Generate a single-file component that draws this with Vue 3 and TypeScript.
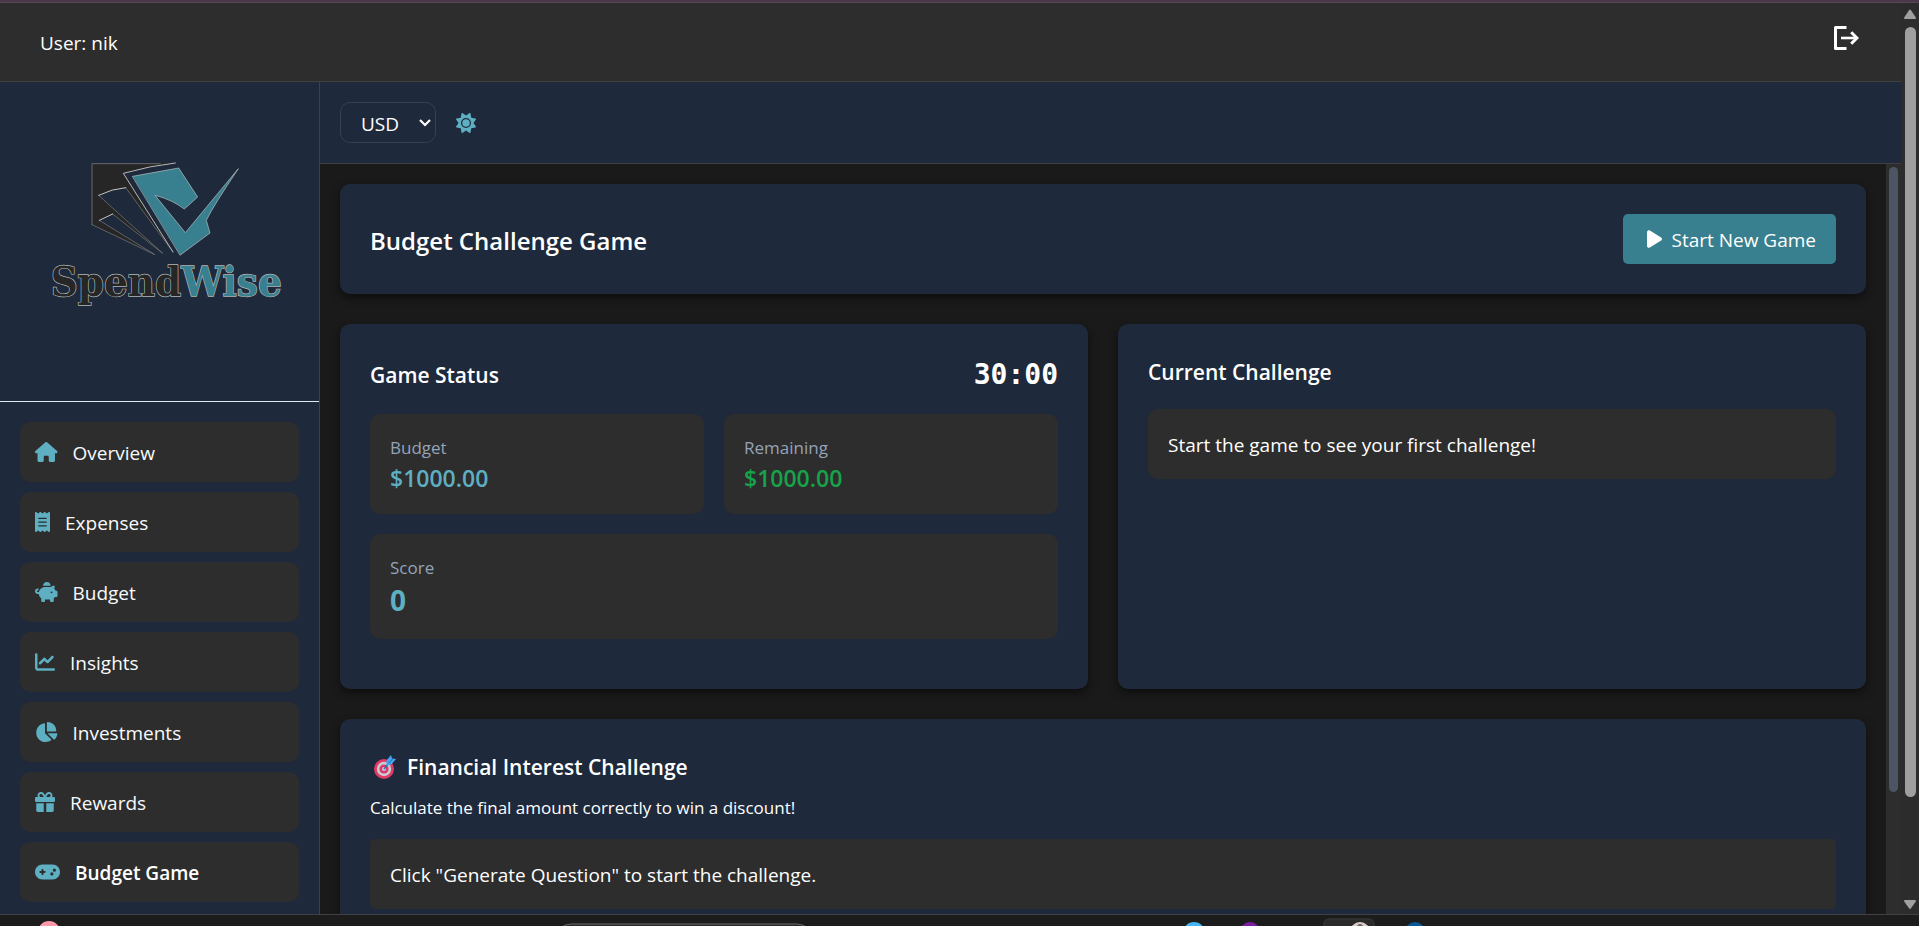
<script setup lang="ts">
import { computed, ref } from 'vue'

interface NavItem {
  label: string
  width: number
  path: string
  active?: boolean
}

const currency = ref('USD')
const currencies = ['USD', 'EUR', 'GBP']
const budget = ref(1000)
const remaining = ref(1000)
const score = ref(0)
const secondsLeft = ref(1800)

const clock = computed(() => {
  const minutes = Math.floor(secondsLeft.value / 60)
  const seconds = secondsLeft.value % 60
  return `${String(minutes).padStart(2, '0')}:${String(seconds).padStart(2, '0')}`
})

const money = (value: number): string => `$${value.toFixed(2)}`

const navItems: NavItem[] = [
  {
    label: 'Overview',
    width: 576,
    path: 'M575.8 255.5c0 18-15 32.1-32 32.1h-32l.7 160.2c0 2.7-.2 5.4-.5 8.1V472c0 22.1-17.9 40-40 40H456c-1.1 0-2.2 0-3.3-.1c-1.4 .1-2.8 .1-4.2 .1H416 392c-22.1 0-40-17.9-40-40V448 384c0-17.7-14.3-32-32-32H256c-17.7 0-32 14.3-32 32v64 24c0 22.1-17.9 40-40 40H160 128.1c-1.5 0-3-.1-4.5-.2c-1.2 .1-2.4 .2-3.6 .2H104c-22.1 0-40-17.9-40-40V360c0-.9 0-1.9 .1-2.8V287.6H32c-18 0-32-14-32-32.1c0-9 3-17 10-24L266.4 8c7-7 15-8 22-8s15 2 21 7L564.8 231.5c8 7 12 15 11 24z',
  },
  {
    label: 'Expenses',
    width: 384,
    path: 'M14 2.2C22.5-1.7 32.5-.3 39.6 5.8L80 40.4 120.4 5.8c9-7.7 22.3-7.7 31.2 0L192 40.4 232.4 5.8c9-7.7 22.3-7.7 31.2 0L304 40.4 344.4 5.8c7.1-6.1 17.1-7.5 25.6-3.6s14 12.4 14 21.8V488c0 9.4-5.5 17.9-14 21.8s-18.5 2.5-25.6-3.6L304 471.6l-40.4 34.6c-9 7.7-22.3 7.7-31.2 0L192 471.6l-40.4 34.6c-9 7.7-22.3 7.7-31.2 0L80 471.6 39.6 506.2c-7.1 6.1-17.1 7.5-25.6 3.6S0 497.4 0 488V24C0 14.6 5.5 6.1 14 2.2zM96 144c-8.8 0-16 7.2-16 16s7.2 16 16 16H288c8.8 0 16-7.2 16-16s-7.2-16-16-16H96zM80 352c0 8.8 7.2 16 16 16H288c8.8 0 16-7.2 16-16s-7.2-16-16-16H96c-8.8 0-16 7.2-16 16zM96 240c-8.8 0-16 7.2-16 16s7.2 16 16 16H288c8.8 0 16-7.2 16-16s-7.2-16-16-16H96z',
  },
  {
    label: 'Budget',
    width: 576,
    path: 'M400 96l0 .7c-5.3-.4-10.6-.7-16-.7H256c-16.5 0-32.5 2.1-47.8 6c-.1-2-.2-4-.2-6c0-53 43-96 96-96s96 43 96 96zm-16 32c3.5 0 7 .1 10.4 .3c4.2 .3 8.4 .7 12.6 1.3C424.6 109.1 450.8 96 480 96h11.5c10.4 0 18 9.8 15.5 19.9l-13.8 55.2c15.8 14.8 28.7 32.8 37.5 52.9H544c17.7 0 32 14.3 32 32v96c0 17.7-14.3 32-32 32H512c-9.1 12.1-19.9 22.9-32 32v64c0 17.7-14.3 32-32 32H416c-17.7 0-32-14.3-32-32V448H256v32c0 17.7-14.3 32-32 32H192c-17.7 0-32-14.3-32-32V416c-34.9-26.2-58.7-66.3-63.2-112H68c-37.6 0-68-30.4-68-68s30.4-68 68-68h4c13.3 0 24 10.7 24 24s-10.7 24-24 24H68c-11 0-20 9-20 20s9 20 20 20H99.2c12.1-59.8 57.7-107.5 116.3-122.8c12.9-3.4 26.5-5.2 40.5-5.2H384zm64 136a24 24 0 1 0 -48 0 24 24 0 1 0 48 0z',
  },
  {
    label: 'Insights',
    width: 512,
    path: 'M64 64c0-17.7-14.3-32-32-32S0 46.3 0 64V400c0 44.2 35.8 80 80 80H480c17.7 0 32-14.3 32-32s-14.3-32-32-32H80c-8.8 0-16-7.2-16-16V64zm406.6 86.6c12.5-12.5 12.5-32.8 0-45.3s-32.8-12.5-45.3 0L320 210.7l-57.4-57.4c-12.5-12.5-32.8-12.5-45.3 0l-112 112c-12.5 12.5-12.5 32.8 0 45.3s32.8 12.5 45.3 0L240 221.3l57.4 57.4c12.5 12.5 32.8 12.5 45.3 0l128-128z',
  },
  {
    label: 'Investments',
    width: 576,
    path: 'M304 240V16.6c0-9 7-16.6 16-16.6C443.7 0 544 100.3 544 224c0 9-7.6 16-16.6 16H304zM32 272C32 150.7 122.1 50.3 239 34.3c9.2-1.3 17 6.1 17 15.4V288L412.5 444.5c6.7 6.7 6.2 17.7-1.5 23.1C371.8 495.6 323.8 512 272 512C139.5 512 32 404.6 32 272zm526.4 16c9.3 0 16.6 7.8 15.4 17c-7.7 55.9-34.6 105.6-73.9 142.3c-6 5.6-15.4 5.2-21.2-.7L320 288H558.4z',
  },
  {
    label: 'Rewards',
    width: 512,
    path: 'M190.5 68.8L225.3 128H224 152c-22.1 0-40-17.9-40-40s17.9-40 40-40h2.2c14.9 0 28.8 7.9 36.3 20.8zM64 88c0 14.4 3.5 28 9.6 40H32c-17.7 0-32 14.3-32 32v64c0 17.7 14.3 32 32 32H480c17.7 0 32-14.3 32-32V160c0-17.7-14.3-32-32-32H438.4c6.1-12 9.6-25.6 9.6-40c0-48.6-39.4-88-88-88h-2.2c-31.9 0-61.5 16.9-77.7 44.4L256 85.5l-24.1-41C215.7 16.9 186.1 0 154.2 0H152C103.4 0 64 39.4 64 88zm336 0c0 22.1-17.9 40-40 40H288h-1.3l34.8-59.2C329.1 55.9 342.9 48 357.8 48H360c22.1 0 40 17.9 40 40zM32 288V464c0 26.5 21.5 48 48 48H224V288H32zM288 512H432c26.5 0 48-21.5 48-48V288H288V512z',
  },
  {
    label: 'Budget Game',
    width: 640,
    active: true,
    path: 'M192 64C86 64 0 150 0 256S86 448 192 448H448c106 0 192-86 192-192s-86-192-192-192H192zM496 168a40 40 0 1 1 0 80 40 40 0 1 1 0-80zM392 304a40 40 0 1 1 80 0 40 40 0 1 1 -80 0zM168 200c0-13.3 10.7-24 24-24s24 10.7 24 24v32h32c13.3 0 24 10.7 24 24s-10.7 24-24 24H216v32c0 13.3-10.7 24-24 24s-24-10.7-24-24V280H136c-13.3 0-24-10.7-24-24s10.7-24 24-24h32V200z',
  },
]
</script>

<template>
  <div class="desktop">
    <div class="window-edge"></div>
    <div class="viewport">
      <div class="app">
        <header class="user-bar">
          <span class="user-name">User: nik</span>
          <button class="logout" type="button" aria-label="Log out">
            <svg viewBox="0 0 26 26" width="26" height="26" fill="none" stroke="#ffffff">
              <path d="M13.5 2.5H2.5V23.5H13.5" stroke-width="3" stroke-linejoin="round" />
              <path d="M8 13H24" stroke-width="2.6" />
              <path d="M18.2 7.2L24 13L18.2 18.8" stroke-width="3" />
            </svg>
          </button>
        </header>

        <div class="body">
          <aside class="sidebar">
            <div class="brand">
              <svg class="logo" viewBox="0 0 720 450" role="img" aria-label="SpendWise">
                <g stroke-linejoin="round" stroke-linecap="round">
                  <path d="M135 20L385 18Q310 26 229 49L378 285L236 92Q195 95 155 115L346 288L197 171L157 190L322 292L135 203Z" fill="#262626" />
                  <path d="M135 203V20H340" fill="none" stroke="#66686c" stroke-width="3" />
                  <path d="M135 203L322 292M346 288L155 115M236 92L378 285M157 190L322 292M197 171L346 288" fill="none" stroke="#7d7e80" stroke-width="2" />
                  <path d="M155 115Q195 95 236 92M157 190L197 171" fill="none" stroke="#c4c4c0" stroke-width="3" />
                  <path d="M385 18Q310 26 229 49L378 285" fill="none" stroke="#b9b9b4" stroke-width="3" />
                  <path d="M257 58L395 33L452 120L412 156Q375 128 324 115L415 227L574 35Q500 145 478 190L489 228L400 294Z" fill="#38808f" stroke="#b9c4c4" stroke-width="2" />
                </g>
                <text class="logo-text" x="11" y="416" fill="#262626" stroke="#b4b6b4" stroke-width="4" paint-order="stroke">Spend<tspan fill="#38808f">Wise</tspan></text>
              </svg>
            </div>
            <nav class="nav">
              <a
                v-for="item in navItems"
                :key="item.label"
                class="nav-link"
                :class="{ active: item.active }"
                href="#"
                :aria-current="item.active ? 'page' : undefined"
              >
                <svg class="nav-icon" :viewBox="`0 0 ${item.width} 512`" aria-hidden="true">
                  <path :d="item.path" />
                </svg>
                <span class="nav-label">{{ item.label }}</span>
              </a>
            </nav>
          </aside>

          <div class="content">
            <div class="toolbar">
              <div class="select-wrap">
                <select v-model="currency" class="currency" aria-label="Currency">
                  <option v-for="code in currencies" :key="code">{{ code }}</option>
                </select>
                <svg class="chevron" viewBox="0 0 12 8" aria-hidden="true">
                  <path d="M1 1L6 6L11 1" fill="none" stroke="#ffffff" stroke-width="2.2" />
                </svg>
              </div>
              <button class="theme" type="button" aria-label="Toggle theme">
                <svg viewBox="0 0 512 512" width="20" height="20" fill="#5dafc1">
                  <path d="M361.5 1.2c5 2.1 8.6 6.6 9.6 11.9L391 121l107.9 19.8c5.3 1 9.8 4.6 11.9 9.6s1.5 10.7-1.6 15.2L446.9 256l62.3 90.3c3.1 4.5 3.7 10.2 1.6 15.2s-6.6 8.6-11.9 9.6L391 391 371.1 498.9c-1 5.3-4.6 9.8-9.6 11.9s-10.7 1.5-15.2-1.6L256 446.9l-90.3 62.3c-4.5 3.1-10.2 3.7-15.2 1.6s-8.6-6.6-9.6-11.9L121 391 13.1 371.1c-5.3-1-9.8-4.6-11.9-9.6s-1.5-10.7 1.6-15.2L65.1 256 2.8 165.7c-3.1-4.5-3.7-10.2-1.6-15.2s6.6-8.6 11.9-9.6L121 121 140.9 13.1c1-5.3 4.6-9.8 9.6-11.9s10.7-1.5 15.2 1.6L256 65.1 346.3 2.8c4.5-3.1 10.2-3.7 15.2-1.6zM160 256a96 96 0 1 1 192 0 96 96 0 1 1 -192 0zm224 0a128 128 0 1 0 -256 0 128 128 0 1 0 256 0z" />
                </svg>
              </button>
            </div>

            <div class="scroll-area">
              <main class="cards">
                <section class="card title-card">
                  <h1>Budget Challenge Game</h1>
                  <button class="start" type="button">
                    <svg viewBox="0 0 384 512" width="15" height="20" fill="#ffffff" aria-hidden="true">
                      <path d="M73 39c-14.8-9.1-33.4-9.4-48.5-.9S0 62.6 0 80V432c0 17.4 9.4 33.4 24.5 41.9s33.7 8.1 48.5-.9L361 297c14.3-8.7 23-24.2 23-41s-8.7-32.2-23-41L73 39z" />
                    </svg>
                    <span class="start-label">Start New Game</span>
                  </button>
                </section>

                <div class="columns">
                  <section class="card">
                    <div class="status-head">
                      <h2>Game Status</h2>
                      <span class="clock">{{ clock }}</span>
                    </div>
                    <div class="stats">
                      <div class="stat">
                        <span class="stat-label">Budget</span>
                        <span class="stat-value">{{ money(budget) }}</span>
                      </div>
                      <div class="stat">
                        <span class="stat-label">Remaining</span>
                        <span class="stat-value positive">{{ money(remaining) }}</span>
                      </div>
                      <div class="stat wide">
                        <span class="stat-label">Score</span>
                        <span class="score">{{ score }}</span>
                      </div>
                    </div>
                  </section>

                  <section class="card">
                    <h2 class="challenge-title">Current Challenge</h2>
                    <p class="notice">Start the game to see your first challenge!</p>
                  </section>
                </div>

                <section class="card interest">
                  <h2 class="interest-title">
                    <svg viewBox="0 0 24 28" width="24" height="28" aria-hidden="true">
                      <circle cx="11" cy="16" r="10" fill="#e23a63" />
                      <circle cx="11" cy="16" r="7.2" fill="#c9cbd6" />
                      <circle cx="11" cy="16" r="4.6" fill="#dc3a68" />
                      <circle cx="11" cy="16" r="2" fill="#c9cbd6" />
                      <path d="M11 16L17 9" stroke="#2f6fa8" stroke-width="1.6" />
                      <path d="M13.5 12.5L13.5 7.5L18 2L19 5.5L23 6L18.4 11.5Z" fill="#43a6ee" />
                      <path d="M15.5 10.5L20 5.5" stroke="#1f6fc0" stroke-width="1" />
                    </svg>
                    <span>Financial Interest Challenge</span>
                  </h2>
                  <p class="hint">Calculate the final amount correctly to win a discount!</p>
                  <p class="notice small-radius">Click "Generate Question" to start the challenge.</p>
                </section>
              </main>
              <div class="inner-track" aria-hidden="true"><div class="inner-thumb"></div></div>
            </div>
          </div>
        </div>
      </div>

      <div class="outer-track" aria-hidden="true">
        <svg viewBox="0 0 14 11" width="14" height="11"><path d="M7 1.5L12 9H2Z" fill="#9f9f9f" stroke="#9f9f9f" stroke-width="2" stroke-linejoin="round" /></svg>
        <div class="outer-lane"><div class="outer-thumb"></div></div>
        <svg viewBox="0 0 14 11" width="14" height="11"><path d="M7 9L12 2H2Z" fill="#9f9f9f" stroke="#9f9f9f" stroke-width="2" stroke-linejoin="round" /></svg>
      </div>
    </div>

    <div class="taskbar" aria-hidden="true">
      <svg class="task-art" viewBox="0 0 1919 11" preserveAspectRatio="xMinYMin slice">
        <circle cx="49" cy="17" r="11" fill="#ff98a8" />
        <rect x="556" y="9" width="256" height="30" rx="15" fill="#2b2b2b" stroke="#6a6a6a" />
        <circle cx="1194" cy="18" r="11" fill="#45b5f5" />
        <circle cx="1250" cy="17" r="10" fill="#7a1fa2" />
        <rect x="1324" y="4" width="50" height="40" rx="5" fill="#2a2a2a" stroke="#3a3a3a" />
        <circle cx="1360" cy="17" r="10" fill="#d8cfca" />
        <circle cx="1360" cy="12" r="3" fill="#6a5f5c" />
        <circle cx="1415" cy="17" r="10" fill="#0a5796" />
      </svg>
    </div>
  </div>
</template>

<style>
html,
body {
  margin: 0;
  background: #1a1a1a;
}
</style>

<style scoped>
.desktop {
  display: flex;
  flex-direction: column;
  height: 100vh;
  overflow: hidden;
  background: #1a1a1a;
  color: #ffffff;
  font-family: "Open Sans", "Noto Sans", sans-serif;
  font-size: 19px;
  line-height: 30px;
}

.desktop *,
.desktop {
  box-sizing: border-box;
}

h1,
h2,
p {
  margin: 0;
}

button,
select {
  margin: 0;
  color: inherit;
  font: inherit;
}

svg {
  display: block;
  flex: none;
}

.window-edge {
  flex: none;
  height: 3px;
  background: #4c3848;
  border-bottom: 1px solid #554853;
}

.viewport {
  display: flex;
  flex: 1;
  min-height: 0;
}

.app {
  display: flex;
  flex: 1;
  flex-direction: column;
  min-width: 0;
}

.user-bar {
  display: flex;
  flex: none;
  align-items: flex-start;
  justify-content: space-between;
  height: 79px;
  padding: 22px 42px 0 40px;
  background: #2d2d2d;
  border-bottom: 1px solid #404040;
}

.user-name {
  line-height: 36px;
}

.logout,
.theme {
  padding: 0;
  background: none;
  border: 0;
}

.body {
  display: flex;
  flex: 1;
  min-height: 0;
}

.sidebar {
  display: flex;
  flex: none;
  flex-direction: column;
  width: 320px;
  overflow: hidden;
  background: #1e293b;
  border-right: 1px solid #404040;
}

.brand {
  display: flex;
  flex: none;
  align-items: center;
  justify-content: center;
  height: 320px;
  padding: 0 0 20px 14px;
  border-bottom: 1px solid #e2e8f0;
}

.logo {
  width: 240px;
  height: 150px;
}

.logo-text {
  font-family: "DejaVu Serif Condensed", "DejaVu Serif", serif;
  font-size: 125px;
  font-weight: 700;
}

.nav {
  display: flex;
  flex-direction: column;
  gap: 10px;
  padding: 20px;
}

.nav-link {
  display: flex;
  flex: none;
  align-items: center;
  gap: 15px;
  height: 60px;
  padding: 0 15px;
  background: #2d2d2d;
  border-radius: 10px;
  color: #f8fafc;
  text-decoration: none;
}

.nav-link.active {
  color: #ffffff;
  font-weight: 600;
}

.nav-icon {
  height: 20px;
  fill: #5dafc1;
}

.nav-label,
.start-label {
  padding-top: 2px;
}

.content {
  display: flex;
  flex: 1;
  flex-direction: column;
  min-width: 0;
}

.toolbar {
  display: flex;
  flex: none;
  align-items: center;
  gap: 20px;
  height: 82px;
  padding: 0 20px;
  background: #1e293b;
  border-bottom: 1px solid #404040;
}

.select-wrap {
  position: relative;
}

.currency {
  width: 96px;
  height: 41px;
  padding: 2px 20px 0;
  appearance: none;
  background: #1e293b;
  border: 1px solid #334155;
  border-radius: 10px;
}

.chevron {
  position: absolute;
  top: 17px;
  right: 5px;
  width: 12px;
  height: 8px;
  pointer-events: none;
}

.scroll-area {
  display: flex;
  flex: 1;
  min-height: 0;
}

.cards {
  display: flex;
  flex: 1;
  flex-direction: column;
  gap: 30px;
  min-width: 0;
  padding: 20px;
  overflow: hidden;
}

.card {
  flex: none;
  min-width: 0;
  padding: 30px;
  background: #1e293b;
  border-radius: 10px;
  box-shadow: 0 4px 8px rgba(0, 0, 0, 0.5);
}

.title-card {
  display: flex;
  align-items: center;
  justify-content: space-between;
}

h1 {
  padding-top: 3px;
  font-size: 24px;
  font-weight: 600;
}

h2 {
  font-size: 21px;
  font-weight: 600;
}

.start {
  display: flex;
  align-items: center;
  gap: 10px;
  height: 50px;
  padding: 0 20px 0 24px;
  background: #38808f;
  border: 0;
  border-radius: 5px;
}

.columns {
  display: grid;
  flex: none;
  grid-template-columns: 1fr 1fr;
  gap: 30px;
}

.columns .card {
  padding-bottom: 50px;
}

.status-head {
  display: flex;
  align-items: center;
  justify-content: space-between;
  height: 40px;
  margin-bottom: 20px;
  padding-top: 2px;
}

.clock {
  font-family: "DejaVu Sans Mono", monospace;
  font-size: 28px;
  font-weight: 700;
}

.stats {
  display: grid;
  grid-template-columns: 1fr 1fr;
  gap: 20px;
}

.stat {
  display: flex;
  flex-direction: column;
  min-height: 100px;
  padding: 19px 20px;
  background: #2d2d2d;
  border-radius: 10px;
}

.stat.wide {
  grid-column: 1 / -1;
  min-height: 105px;
}

.stat-label {
  color: #94a3b8;
  font-size: 17px;
}

.stat-value {
  color: #5dafc1;
  font-size: 23px;
  font-weight: 600;
}

.stat-value.positive {
  color: #16a34a;
}

.score {
  color: #5dafc1;
  font-size: 28px;
  font-weight: 700;
  line-height: 35px;
}

.challenge-title {
  height: 55px;
  line-height: 36px;
}

.notice {
  padding: 21px 20px 19px;
  background: #2d2d2d;
  border-radius: 10px;
}

.notice.small-radius {
  border-radius: 5px;
}

.interest-title {
  display: flex;
  align-items: center;
  gap: 10px;
  padding-left: 3px;
  line-height: 36px;
}

.hint {
  padding: 10px 0 19px;
  font-size: 17px;
  line-height: 25px;
}

.inner-track {
  flex: none;
  width: 15px;
  padding: 3px;
  background: #2d2d2d;
}

.inner-thumb {
  height: 84%;
  background: #4b5563;
  border-radius: 5px;
}

.outer-track {
  display: flex;
  flex: none;
  flex-direction: column;
  align-items: center;
  gap: 7px;
  width: 18px;
  padding: 6px 0 4px;
  background: #2c2c2c;
}

.outer-lane {
  flex: 1;
}

.outer-thumb {
  width: 11px;
  height: 89%;
  background: #9f9f9f;
  border-radius: 6px;
}

.taskbar {
  flex: none;
  height: 12px;
  overflow: hidden;
  background: #1c1c1c;
  border-top: 1px solid #404040;
}

.task-art {
  width: 100%;
  height: 11px;
}
</style>
